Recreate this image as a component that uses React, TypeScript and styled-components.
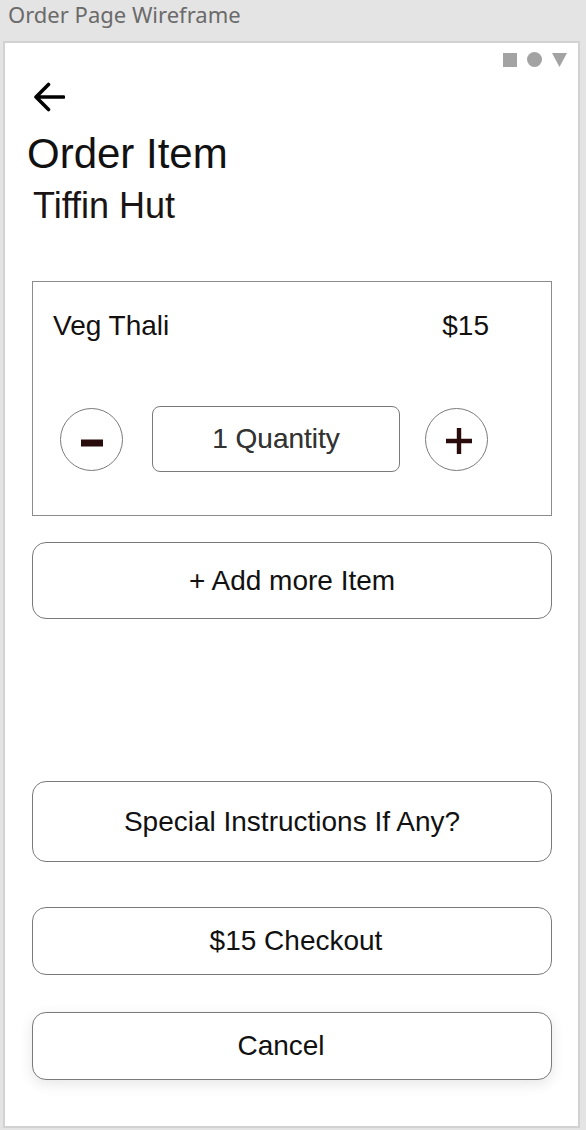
import React from 'react';
import styled, { createGlobalStyle } from 'styled-components';

const GlobalStyle = createGlobalStyle`
  html, body {
    margin: 0;
    padding: 0;
    background: #e4e4e4;
  }
  body {
    font-family: 'Liberation Sans', Arial, sans-serif;
    -webkit-font-smoothing: antialiased;
  }
`;

const Page = styled.div`
  width: 586px;
  height: 1130px;
  background: #e4e4e4;
  display: flex;
  flex-direction: column;
`;

const TitleBar = styled.div`
  height: 41px;
  padding-left: 8px;
  box-sizing: border-box;
`;

const TitleText = styled.div`
  font-family: 'Noto Sans', 'Open Sans', sans-serif;
  font-size: 22px;
  line-height: 29px;
  color: #6a6a6a;
`;

const Frame = styled.div`
  margin-left: 3px;
  width: 577px;
  height: 1087px;
  box-sizing: border-box;
  background: #ffffff;
  border: 2px solid #d2d2d2;
  display: flex;
  flex-direction: column;
`;

const WindowControls = styled.div`
  display: flex;
  justify-content: flex-end;
  align-items: center;
  gap: 10px;
  padding: 9px 11px 0 0;
  height: 15px;
`;

const CtlSquare = styled.span`
  width: 14px;
  height: 14px;
  background: #a3a3a3;
`;

const CtlCircle = styled.span`
  width: 15px;
  height: 15px;
  border-radius: 50%;
  background: #a3a3a3;
`;

const Content = styled.div`
  display: flex;
  flex-direction: column;
  padding: 0 26px 0 27px;
`;

const BackButton = styled.button`
  margin: 15px 0 0 1px;
  padding: 0;
  border: 0;
  background: none;
  width: 32px;
  height: 30px;
  display: block;
  cursor: pointer;
`;

const Heading = styled.h1`
  margin: 21px 0 0 -5px;
  font-size: 42px;
  line-height: 42px;
  font-weight: 400;
  color: #111;
`;

const Restaurant = styled.h2`
  margin: 13px 0 0 1px;
  font-size: 36px;
  line-height: 36px;
  font-weight: 400;
  color: #1a1414;
`;

const ItemCard = styled.div`
  margin-top: 57px;
  height: 235px;
  box-sizing: border-box;
  border: 1px solid #8c8c8c;
  display: flex;
  flex-direction: column;
`;

const ItemHeader = styled.div`
  display: flex;
  justify-content: space-between;
  padding: 30px 62px 0 20px;
  font-size: 28px;
  line-height: 28px;
  color: #141010;
`;

const QuantityRow = styled.div`
  display: flex;
  align-items: center;
  margin-top: 66px;
  padding-left: 27px;
`;

const RoundButton = styled.button<{ $gap: number }>`
  width: 63px;
  height: 63px;
  margin-left: ${(p) => p.$gap}px;
  padding: 0;
  border-radius: 50%;
  border: 1.5px solid #7a7a7a;
  background: #fff;
  display: flex;
  align-items: center;
  justify-content: center;
  cursor: pointer;
`;

const QuantityBox = styled.div`
  width: 248px;
  height: 66px;
  margin-left: 29px;
  box-sizing: border-box;
  border: 1.5px solid #7a7a7a;
  border-radius: 8px;
  display: flex;
  align-items: center;
  justify-content: center;
  font-size: 28px;
  color: #333;
  text-shadow: 0 0 0.6px rgba(0, 0, 0, 0.4);
`;

const ActionButton = styled.button<{
  $top: number;
  $height: number;
  $shift?: number;
  $shadow?: boolean;
}>`
  margin-top: ${(p) => p.$top}px;
  height: ${(p) => p.$height}px;
  width: 100%;
  box-sizing: border-box;
  padding: 0;
  padding-left: ${(p) => Math.max(0, (p.$shift ?? 0) * 2)}px;
  padding-right: ${(p) => Math.max(0, -(p.$shift ?? 0) * 2)}px;
  border: 1.5px solid #7a7a7a;
  border-radius: 14px;
  background: #fff;
  font-family: 'Liberation Sans', Arial, sans-serif;
  font-size: 28px;
  color: #111;
  cursor: pointer;
  box-shadow: ${(p) => (p.$shadow ? '0 4px 14px rgba(0, 0, 0, 0.1)' : 'none')};
`;

const BackArrow = () => (
  <svg width="32" height="30" viewBox="0 0 32 30">
    <path
      d="M30.5 15H3M15.5 2.5L3 15l12.5 12.5"
      fill="none"
      stroke="#000"
      strokeWidth="3.6"
      strokeLinecap="round"
      strokeLinejoin="round"
    />
  </svg>
);

const Triangle = () => (
  <svg width="15" height="14" viewBox="0 0 15 14">
    <path d="M0 0h15L7.5 14z" fill="#a3a3a3" />
  </svg>
);

const MinusIcon = () => (
  <svg width="24" height="10" viewBox="0 0 24 10" style={{ marginTop: 8 }}>
    <rect x="1" y="1.5" width="22" height="7" fill="#2b0c0c" />
  </svg>
);

const PlusIcon = () => (
  <svg width="28" height="28" viewBox="0 0 28 28" style={{ marginLeft: 4, marginTop: 3 }}>
    <path d="M14 1v26M1 14h26" stroke="#2b0c0c" strokeWidth="4.4" />
  </svg>
);

export default function App() {
  return (
    <Page>
      <GlobalStyle />
      <TitleBar>
        <TitleText>Order Page Wireframe</TitleText>
      </TitleBar>
      <Frame>
        <WindowControls>
          <CtlSquare />
          <CtlCircle />
          <Triangle />
        </WindowControls>
        <Content>
          <BackButton aria-label="Back">
            <BackArrow />
          </BackButton>
          <Heading>Order Item</Heading>
          <Restaurant>Tiffin Hut</Restaurant>

          <ItemCard>
            <ItemHeader>
              <span>Veg Thali</span>
              <span>$15</span>
            </ItemHeader>
            <QuantityRow>
              <RoundButton $gap={0} aria-label="Decrease">
                <MinusIcon />
              </RoundButton>
              <QuantityBox>1 Quantity</QuantityBox>
              <RoundButton $gap={25} aria-label="Increase">
                <PlusIcon />
              </RoundButton>
            </QuantityRow>
          </ItemCard>

          <ActionButton $top={26} $height={77}>+ Add more Item</ActionButton>
          <ActionButton $top={162} $height={81}>Special Instructions If Any?</ActionButton>
          <ActionButton $top={45} $height={68} $shift={4}>
            $15 Checkout
          </ActionButton>
          <ActionButton $top={37} $height={68} $shift={-11} $shadow>
            Cancel
          </ActionButton>
        </Content>
      </Frame>
    </Page>
  );
}
